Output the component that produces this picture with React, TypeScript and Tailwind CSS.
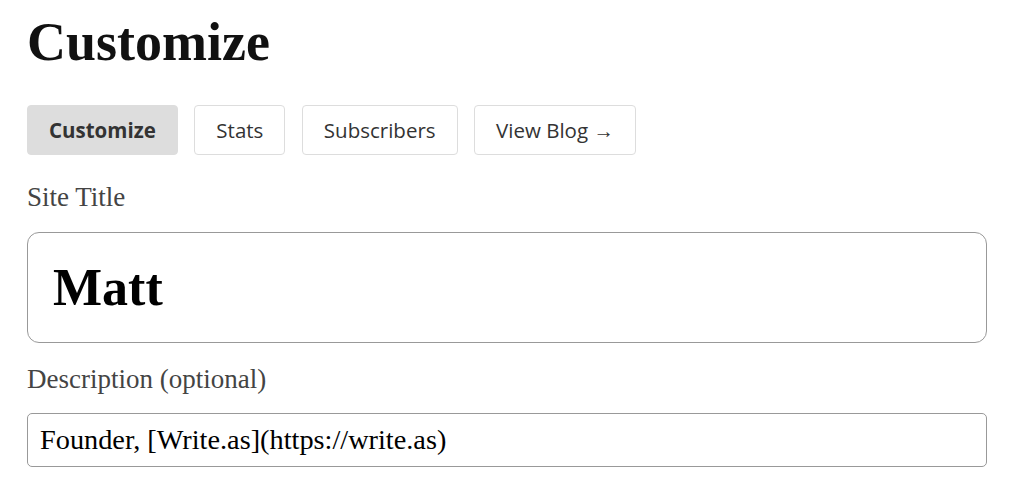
export default function App() {
  const tabs = [
    { label: "Customize", active: true },
    { label: "Stats" },
    { label: "Subscribers" },
    { label: "View Blog →" },
  ];
  return (
    <div className="min-h-screen bg-white pl-[27px] pt-[15px] font-['Liberation_Serif',serif]">
      <div className="w-[960px]">
        <h1 className="text-[54px] font-bold leading-[54px] text-[#111]">Customize</h1>

        <nav className="mt-[36px] flex gap-[16.5px] font-['Open_Sans',sans-serif]">
          {tabs.map((t) => (
            <a
              key={t.label}
              href="#"
              className={
                t.active
                  ? "rounded-[4px] border border-[#dddddd] bg-[#dddddd] px-[21px] py-[12px] text-[20.5px] font-bold leading-[24px] text-[#333]"
                  : "rounded-[4px] border border-[#dddddd] bg-white px-[21px] py-[12px] text-[20.5px] leading-[24px] text-[#333]"
              }
            >
              {t.label}
            </a>
          ))}
        </nav>

        <label className="mt-[23px] block text-[27px] leading-[39px] text-[#444]">Site Title</label>
        <input
          readOnly
          defaultValue="Matt"
          className="mt-[15px] block h-[111px] w-full rounded-[12px] border border-[#999] pl-[25px] text-[52px] font-bold text-black outline-none"
        />

        <label className="mt-[17px] block text-[27px] leading-[39px] text-[#444]">Description (optional)</label>
        <input
          readOnly
          defaultValue="Founder, [Write.as](https://write.as)"
          className="mt-[14px] block h-[54px] w-full rounded-[5px] border border-[#999] pl-[12px] text-[28.3px] text-black outline-none"
        />
      </div>
    </div>
  );
}
